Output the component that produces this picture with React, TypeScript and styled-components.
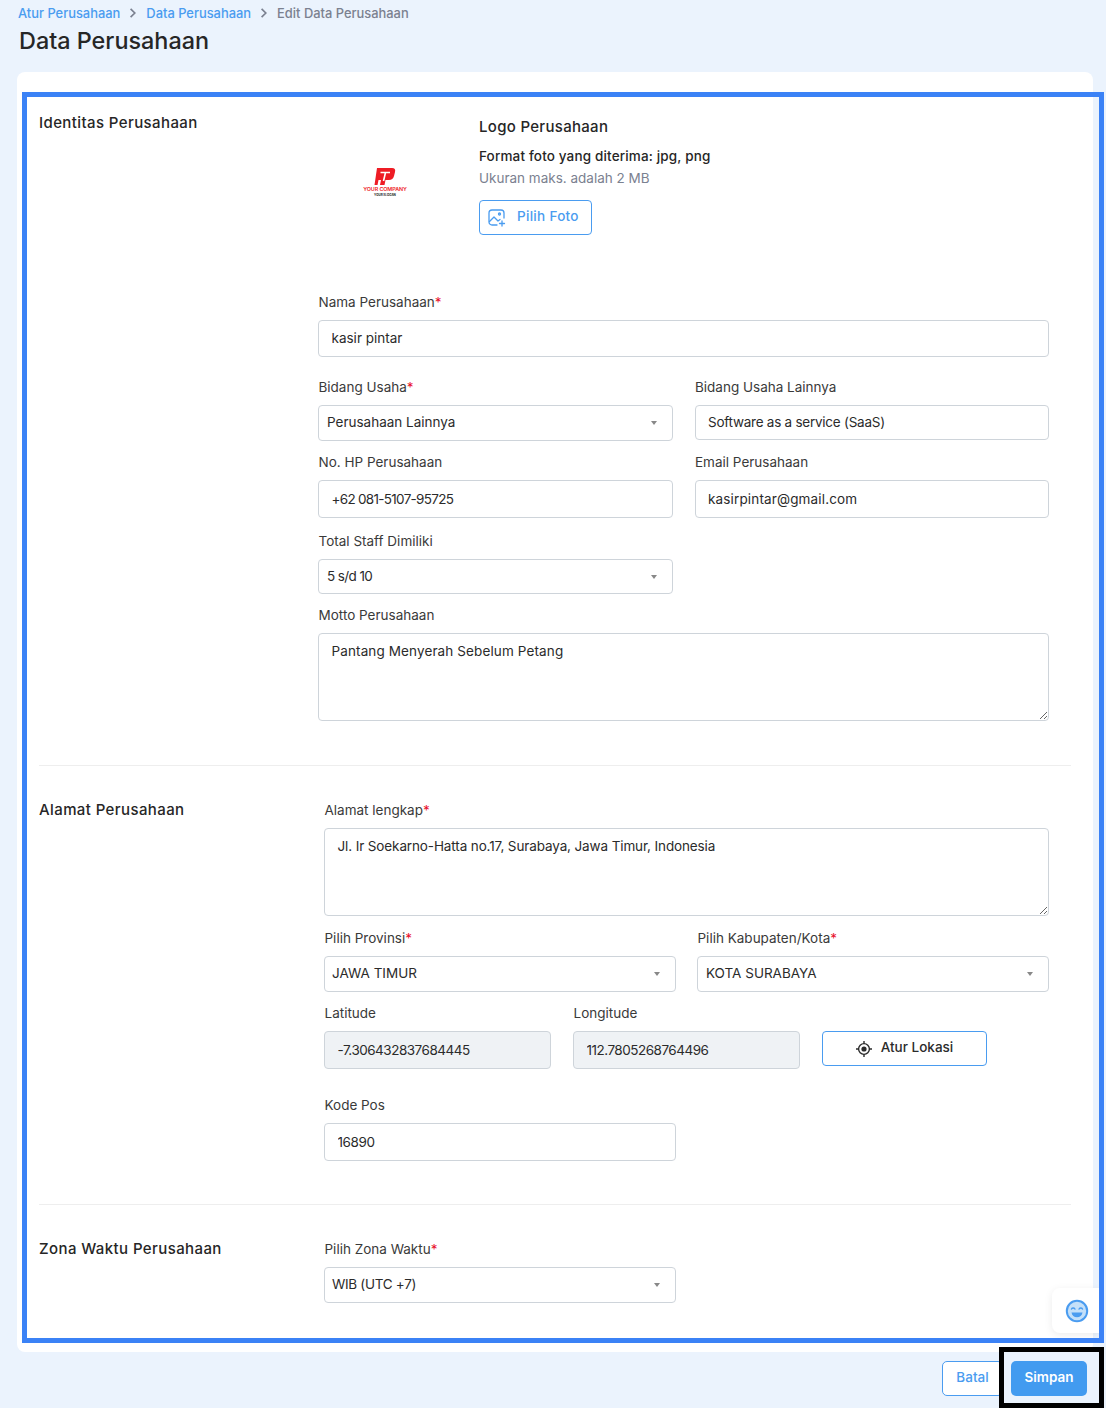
import React from 'react';
import styled, {createGlobalStyle} from 'styled-components';

const FONT = `Inter, 'Noto Sans', sans-serif`;

const GlobalStyle = createGlobalStyle`
  html, body {
    margin: 0;
    padding: 0;
    background: #ebf3fd;
  }
  * {
    box-sizing: border-box;
  }
`;

const LogoMark = () => (
  <svg width="46" height="30" viewBox="0 0 46 30">
    <path d="M15 1H30Q34 1 33 5L32 9Q31 13 27 13H23.5L22.5 18H18L19 13H16.5L15.5 18H12.5z" fill="#ee1c25" />
    <path d="M18.5 5.5H28M23.5 5.5L21.5 14" fill="none" stroke="#fff" strokeWidth="1.6" />
    <text x="23" y="24" textAnchor="middle" fontSize="5.4" fontWeight="600" fill="#ee1c25" fontFamily={FONT} letterSpacing="-0.1">
      YOUR COMPANY
    </text>
    <text x="23" y="29" textAnchor="middle" fontSize="3" fontWeight="700" fill="#222" fontFamily={FONT}>
      YOUR SLOGAN
    </text>
  </svg>
);

const ImagePlusIcon = () => (
  <svg width="18" height="18" viewBox="0 0 18 18" fill="none" stroke="#4a9cf0" strokeWidth="1.3" strokeLinecap="round" strokeLinejoin="round">
    <path d="M9 16H4a3 3 0 0 1-3-3V4a3 3 0 0 1 3-3h9a3 3 0 0 1 3 3v5" />
    <path d="M1.5 12.5 6 8l4 4 2-1.5" />
    <circle cx="11.5" cy="5" r="1" />
    <path d="M14 12v5M11.5 14.5h5" />
  </svg>
);

const TargetIcon = () => (
  <svg width="16" height="16" viewBox="0 0 16 16" fill="none" stroke="#2b2b2b" strokeWidth="1.4">
    <circle cx="8" cy="8" r="5.4" />
    <circle cx="8" cy="8" r="2.6" fill="#2b2b2b" stroke="none" />
    <path d="M8 0v2.5M8 13.5V16M0 8h2.5M13.5 8H16" />
  </svg>
);

const SmileIcon = () => (
  <svg width="24" height="24" viewBox="0 0 24 24">
    <circle cx="12" cy="12" r="10.2" fill="#c4e0f9" stroke="#4a9cf0" strokeWidth="2" />
    <path d="M6.5 10c.8-1.4 2.6-1.4 3.4 0M14.1 10c.8-1.4 2.6-1.4 3.4 0" fill="none" stroke="#4a9cf0" strokeWidth="1.5" strokeLinecap="round" />
    <path d="M6.5 13.5h11c-.4 3-2.6 4.8-5.5 4.8s-5.1-1.8-5.5-4.8z" fill="#4a9cf0" />
  </svg>
);

const App: React.FunctionComponent = () => (
  <Page>
    <GlobalStyle />
    <Breadcrumb>
      <Crumb>Atur Perusahaan</Crumb>
      <Chevron viewBox="0 0 8 10">
        <path d="M2 1.5 5.5 5 2 8.5" />
      </Chevron>
      <Crumb>Data Perusahaan</Crumb>
      <Chevron viewBox="0 0 8 10">
        <path d="M2 1.5 5.5 5 2 8.5" />
      </Chevron>
      <Crumb $current>Edit Data Perusahaan</Crumb>
    </Breadcrumb>
    <Title>Data Perusahaan</Title>

    <Card>
      <Section $top={41} $bottom={44}>
        <SectionTitle>Identitas Perusahaan</SectionTitle>
        <SectionBody>
          <LogoRow>
            <LogoBox>
              <LogoMark />
            </LogoBox>
            <LogoInfo>
              <LogoTitle>Logo Perusahaan</LogoTitle>
              <LogoFormat>Format foto yang diterima: jpg, png</LogoFormat>
              <LogoHint>Ukuran maks. adalah 2 MB</LogoHint>
              <PickButton type="button">
                <ImagePlusIcon />
                <ButtonLabel>Pilih Foto</ButtonLabel>
              </PickButton>
            </LogoInfo>
          </LogoRow>

          <Field $mb={20}>
            <Label>
              Nama Perusahaan<Req>*</Req>
            </Label>
            <Input $h={37} defaultValue="kasir pintar" />
          </Field>

          <TwoCol $gap={22}>
            <Field $mb={11}>
              <Label>
                Bidang Usaha<Req>*</Req>
              </Label>
              <SelectBox $h={36} $pad={8}>Perusahaan Lainnya</SelectBox>
            </Field>
            <Field $mb={11}>
              <Label>Bidang Usaha Lainnya</Label>
              <Input $h={35} $ls={-0.25} defaultValue="Software as a service (SaaS)" />
            </Field>
          </TwoCol>

          <TwoCol $gap={22}>
            <Field $mb={13}>
              <Label>No. HP Perusahaan</Label>
              <Input $h={38} $ls={-0.7} defaultValue="+62 081-5107-95725" />
            </Field>
            <Field $mb={13}>
              <Label>Email Perusahaan</Label>
              <Input $h={38} $ls={0.15} defaultValue="kasirpintar@gmail.com" />
            </Field>
          </TwoCol>

          <TwoCol $gap={22}>
            <Field $mb={11}>
              <Label>Total Staff Dimiliki</Label>
              <SelectBox $h={35} $pad={8} $ls={-0.6}>5 s/d 10</SelectBox>
            </Field>
          </TwoCol>

          <Field>
            <Label>Motto Perusahaan</Label>
            <TextArea $ls={0.12} defaultValue="Pantang Menyerah Sebelum Petang" />
          </Field>
        </SectionBody>
      </Section>

      <Section $top={34} $bottom={43} $wide $divided>
        <SectionTitle>Alamat Perusahaan</SectionTitle>
        <SectionBody>
          <Field $mb={12}>
            <Label>
              Alamat lengkap<Req>*</Req>
            </Label>
            <TextArea $ls={-0.12} defaultValue="Jl. Ir Soekarno-Hatta no.17, Surabaya, Jawa Timur, Indonesia" />
          </Field>

          <TwoCol $gap={21}>
            <Field $mb={11}>
              <Label>
                Pilih Provinsi<Req>*</Req>
              </Label>
              <SelectBox $h={36}>JAWA TIMUR</SelectBox>
            </Field>
            <Field $mb={11}>
              <Label>
                Pilih Kabupaten/Kota<Req>*</Req>
              </Label>
              <SelectBox $h={36} $pad={8}>KOTA SURABAYA</SelectBox>
            </Field>
          </TwoCol>

          <CoordRow>
            <Field $mb={26}>
              <Label>Latitude</Label>
              <Input $h={38} $disabled $ls={-0.5} readOnly defaultValue="-7.306432837684445" />
            </Field>
            <Field $mb={26}>
              <Label>Longitude</Label>
              <Input $h={38} $disabled $ls={-0.5} readOnly defaultValue="112.7805268764496" />
            </Field>
            <LocationButton type="button">
              <TargetIcon />
              <ButtonLabel>Atur Lokasi</ButtonLabel>
            </LocationButton>
          </CoordRow>

          <TwoCol $gap={21}>
            <Field>
              <Label>Kode Pos</Label>
              <Input $h={38} $ls={-0.4} defaultValue="16890" />
            </Field>
          </TwoCol>
        </SectionBody>
      </Section>

      <Section $top={34} $bottom={48} $wide $divided>
        <SectionTitle>Zona Waktu Perusahaan</SectionTitle>
        <SectionBody>
          <TwoCol $gap={21}>
            <Field>
              <Label>
                Pilih Zona Waktu<Req>*</Req>
              </Label>
              <SelectBox $h={36} $ls={-0.3}>WIB (UTC +7)</SelectBox>
            </Field>
          </TwoCol>
        </SectionBody>
      </Section>
    </Card>

    <Footer>
      <CancelButton type="button">Batal</CancelButton>
      <SaveButton type="button">Simpan</SaveButton>
    </Footer>

    <FeedbackTab>
      <SmileIcon />
    </FeedbackTab>
    <FormHighlight />
    <SaveHighlight />
  </Page>
);

const Page = styled.div`
  position: relative;
  width: 1106px;
  height: 1408px;
  overflow: hidden;
  padding: 3px 13px 0 17px;
  background: #ebf3fd;
  font-family: ${FONT};
  color: #2b2b2b;
`;
const Breadcrumb = styled.nav`
  display: flex;
  align-items: center;
  height: 20px;
  padding-left: 1px;
  gap: 7px;
`;
const Crumb = styled.span<{$current?: boolean}>`
  font-size: 12.9px;
  font-weight: 500;
  color: ${({$current}) => ($current ? '#7b8190' : '#4a9cf0')};
`;
const Chevron = styled.svg`
  width: 12px;
  height: 12px;
  fill: none;
  stroke: #7b8190;
  stroke-width: 1.4;
`;
const Title = styled.h1`
  margin: 3px 0 17px 2px;
  font-size: 23.4px;
  line-height: 29px;
  font-weight: 500;
  color: #262626;
`;
const Card = styled.main`
  background: #fff;
  border-radius: 8px;
  height: 1280px;
  padding: 0 22px;
`;
const Section = styled.section<{$top: number; $bottom: number; $wide?: boolean; $divided?: boolean}>`
  display: grid;
  grid-template-columns: ${({$wide}) => ($wide ? '285px 725px' : '279px 731px')};
  padding: ${({$top, $bottom}) => `${$top}px 0 ${$bottom}px`};
  border-top: ${({$divided}) => ($divided ? '1px solid #eeeeee' : 'none')};
`;
const SectionTitle = styled.h2`
  margin: 0;
  font-size: 15px;
  line-height: 20px;
  font-weight: 500;
  letter-spacing: 0.4px;
  color: #262626;
`;
const SectionBody = styled.div`
  display: flex;
  flex-direction: column;
`;
const LogoRow = styled.div`
  display: grid;
  grid-template-columns: 161px 1fr;
  margin-bottom: 57px;
`;
const LogoBox = styled.div`
  display: flex;
  justify-content: center;
  padding: 54px 27px 0 0;
`;
const LogoInfo = styled.div`
  display: flex;
  flex-direction: column;
  align-items: flex-start;
  padding-top: 4px;
`;
const LogoTitle = styled.div`
  font-size: 15px;
  line-height: 20px;
  font-weight: 500;
  letter-spacing: 0.3px;
  color: #262626;
  margin-bottom: 9px;
`;
const LogoFormat = styled.div`
  font-size: 13.5px;
  line-height: 20px;
  font-weight: 500;
  letter-spacing: 0.15px;
  color: #262626;
  margin-bottom: 2px;
`;
const LogoHint = styled.div`
  font-size: 13.5px;
  line-height: 20px;
  color: #7b8190;
  margin-bottom: 12px;
`;
const ButtonLabel = styled.span`
  padding-bottom: 3px;
`;
const PickButton = styled.button`
  display: flex;
  align-items: center;
  gap: 11px;
  width: 113px;
  height: 35px;
  padding: 0 0 0 8px;
  background: #fff;
  border: 1px solid #4a9cf0;
  border-radius: 4px;
  color: #4a9cf0;
  font-family: ${FONT};
  font-size: 13.5px;
  font-weight: 500;
  letter-spacing: 0.3px;
`;
const Field = styled.div<{$mb?: number}>`
  display: flex;
  flex-direction: column;
  min-width: 0;
  margin-bottom: ${({$mb}) => $mb ?? 0}px;
`;
const Label = styled.label`
  font-size: 13.5px;
  line-height: 20px;
  margin: 0 0 8px 0.5px;
  color: #3a3a3a;
`;
const Req = styled.span`
  color: #e8112d;
`;
const Input = styled.input<{$h: number; $disabled?: boolean; $ls?: number}>`
  width: 100%;
  height: ${({$h}) => $h}px;
  padding: 0 12.5px 1px;
  border: 1px solid #ced4da;
  border-radius: 4px;
  outline: none;
  background: ${({$disabled}) => ($disabled ? '#eff2f5' : '#fff')};
  color: #2b2b2b;
  font-family: ${FONT};
  font-size: 13.5px;
  letter-spacing: ${({$ls}) => $ls ?? 0}px;
`;
const SelectBox = styled.div<{$h: number; $pad?: number; $ls?: number}>`
  position: relative;
  display: flex;
  align-items: center;
  height: ${({$h}) => $h}px;
  padding: 0 0 2px ${({$pad}) => $pad ?? 7}px;
  border: 1px solid #ced4da;
  border-radius: 4px;
  background: #fff;
  color: #2b2b2b;
  font-size: 13.5px;
  letter-spacing: ${({$ls}) => $ls ?? 0}px;
  &::after {
    content: '';
    position: absolute;
    right: 15px;
    top: 50%;
    margin-top: -2px;
    border-left: 3px solid transparent;
    border-right: 3px solid transparent;
    border-top: 4px solid #888;
  }
`;
const TextArea = styled.textarea<{$ls?: number}>`
  display: block;
  width: 100%;
  height: 88px;
  padding: 8px 12.5px;
  border: 1px solid #ced4da;
  border-radius: 4px;
  outline: none;
  color: #2b2b2b;
  font-family: ${FONT};
  font-size: 13.5px;
  line-height: 18px;
  letter-spacing: ${({$ls}) => $ls ?? 0}px;
  resize: vertical;
`;
const TwoCol = styled.div<{$gap: number}>`
  display: grid;
  grid-template-columns: repeat(2, 1fr);
  column-gap: ${({$gap}) => $gap}px;
`;
const CoordRow = styled.div`
  display: grid;
  grid-template-columns: 227px 227px 165px;
  column-gap: 22px;
  align-items: start;
`;
const LocationButton = styled.button`
  display: flex;
  align-items: center;
  justify-content: center;
  gap: 9px;
  height: 35px;
  margin-top: 28px;
  background: #fff;
  border: 1px solid #4a9cf0;
  border-radius: 4px;
  color: #2b2b2b;
  font-family: ${FONT};
  font-size: 13.5px;
  font-weight: 500;
`;
const Footer = styled.footer`
  display: flex;
  justify-content: flex-end;
  gap: 8px;
  padding: 9px 6px 0 0;
`;
const CancelButton = styled.button`
  width: 61px;
  height: 35px;
  padding: 0 0 3px;
  background: #fff;
  border: 1px solid #4a9cf0;
  border-radius: 5px;
  color: #4a9cf0;
  font-family: ${FONT};
  font-size: 13.5px;
  font-weight: 500;
`;
const SaveButton = styled.button`
  width: 76px;
  height: 35px;
  padding: 0 0 3px;
  background: #429bf0;
  border: none;
  border-radius: 5px;
  color: #fff;
  font-family: ${FONT};
  font-size: 13.5px;
  font-weight: 600;
`;
const FeedbackTab = styled.div`
  position: absolute;
  left: 1052px;
  top: 1288px;
  width: 47px;
  height: 45px;
  padding-left: 3px;
  display: flex;
  align-items: center;
  justify-content: center;
  background: #fff;
  border-radius: 8px 0 0 8px;
  box-shadow: 0 2px 8px rgba(0, 0, 0, 0.08);
`;
const FormHighlight = styled.div`
  position: absolute;
  left: 22px;
  top: 92px;
  width: 1082px;
  height: 1251px;
  border: 5px solid #3b82f6;
  pointer-events: none;
`;
const SaveHighlight = styled.div`
  position: absolute;
  left: 999px;
  top: 1347px;
  width: 105px;
  height: 61px;
  border: 5px solid #000;
  pointer-events: none;
`;

export default App;
